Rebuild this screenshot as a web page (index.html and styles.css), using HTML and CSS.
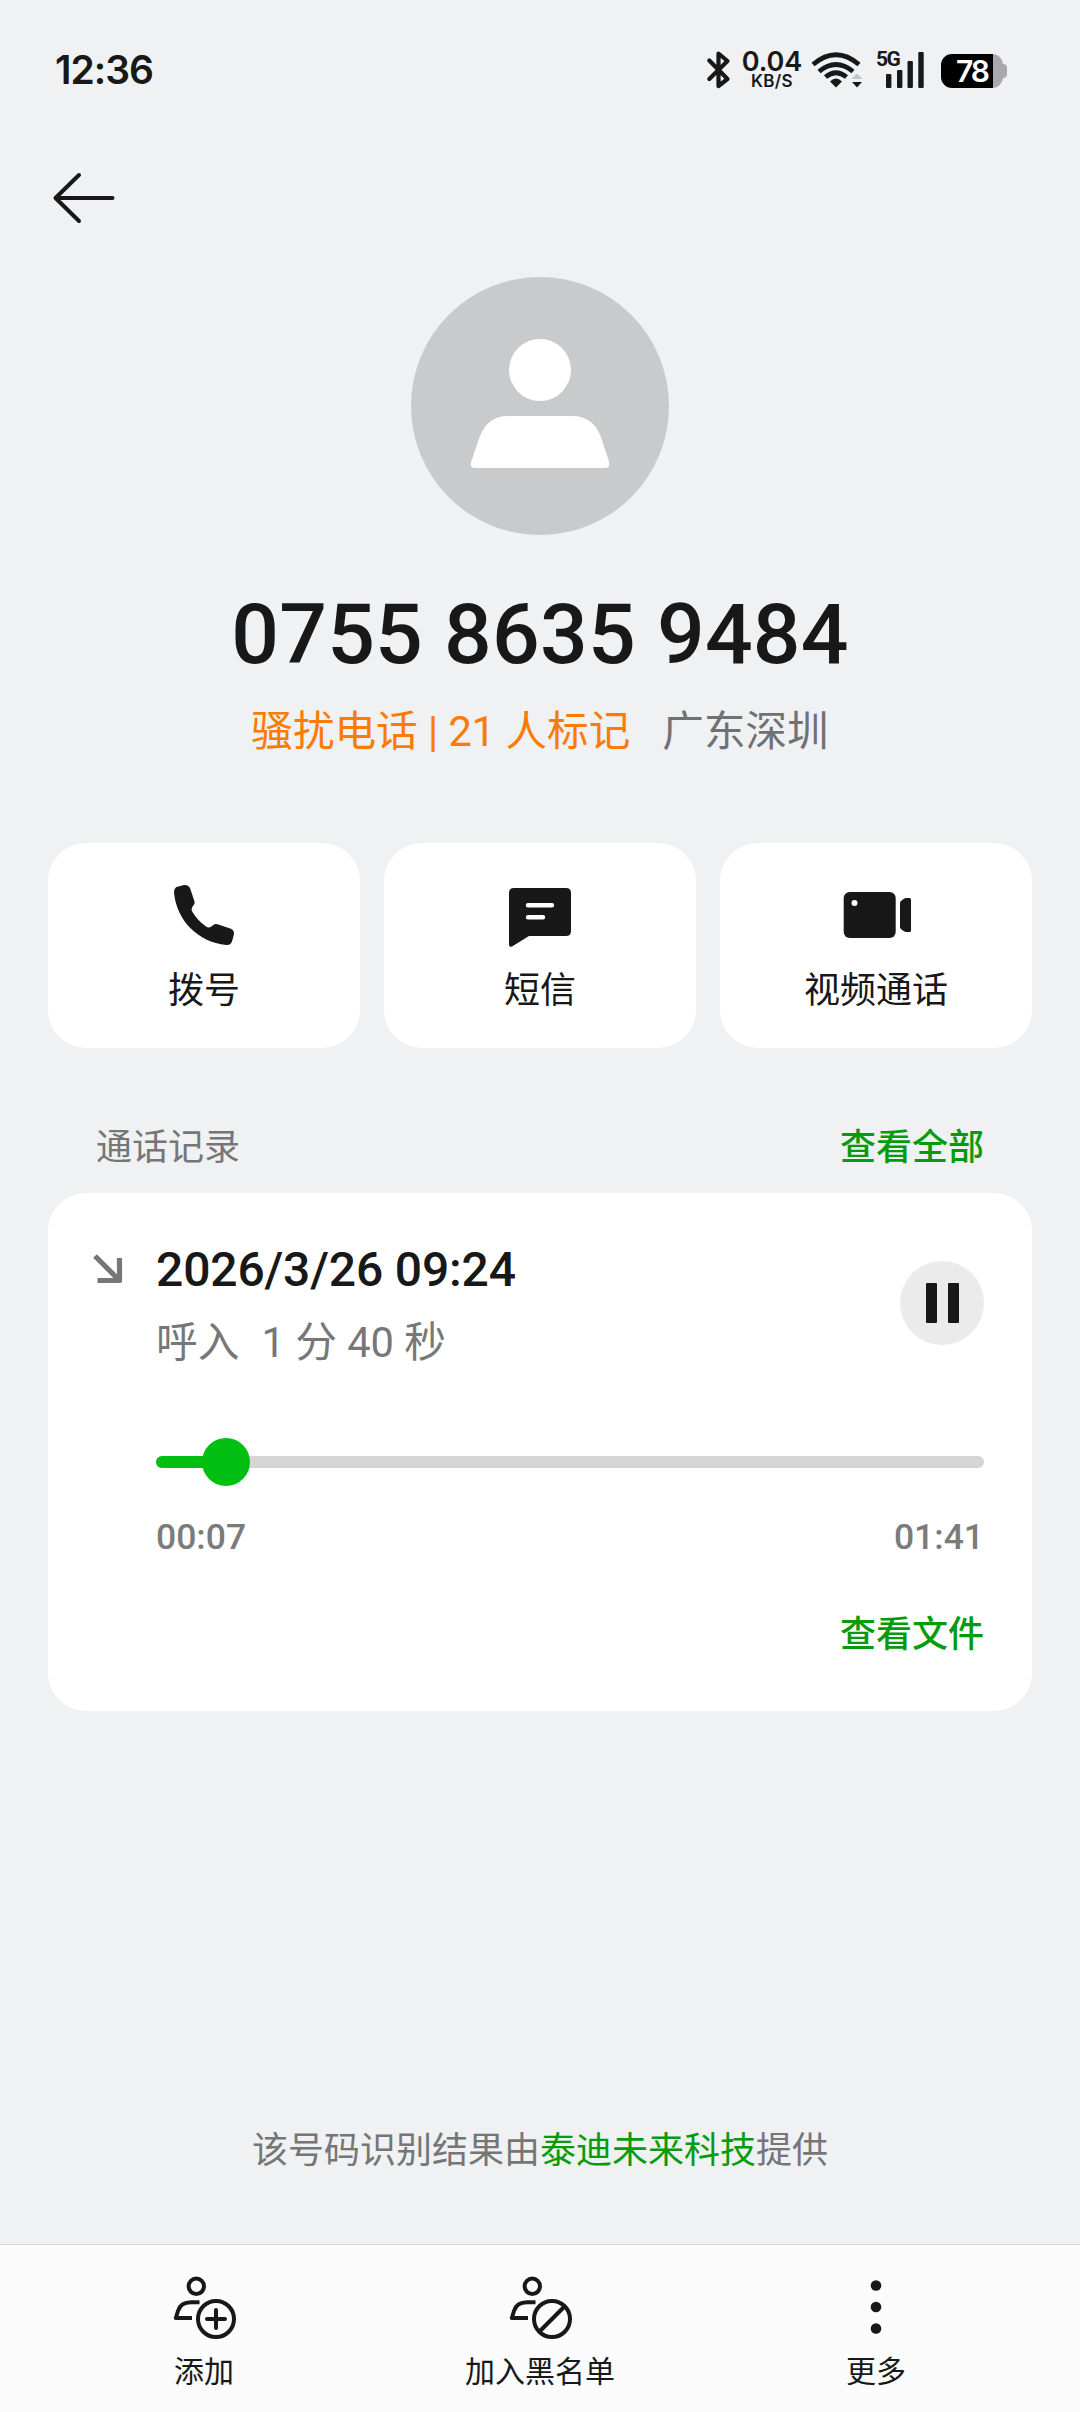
FILE: index.html
```html
<!DOCTYPE html>
<html lang="zh-CN">
<head>
<meta charset="utf-8">
<title>通话详情</title>
<link rel="stylesheet" href="styles.css">
</head>
<body>
<div class="screen">
  <header class="status">
    <span class="clock">12:36</span>
    <div class="status-icons">
      <svg class="bluetooth" width="24" height="38" viewBox="706 51 24 38"><path d="M708.300 60.500 L726.500 79 L717.500 86 V53.500 L726.500 61 L708.300 79" fill="none" stroke="#181818" stroke-width="4.200" stroke-linecap="round" stroke-linejoin="round"/></svg>
      <div class="speed"><span class="speed-value">0.04</span><span class="speed-unit">KB/S</span></div>
      <svg class="wifi" width="52" height="38" viewBox="811 51 52 38">
        <g fill="none" stroke="#181818" stroke-width="4.800">
          <path d="M813 64.500 Q836 45 859 64.500"/><path d="M819 71.500 Q836 57.500 853 71.500"/><path d="M825.500 77 Q836 68.500 846.500 77"/>
        </g>
        <path d="M830 81.500 Q836 75.500 842 81.500 L836 87.500 Z" fill="#181818"/>
        <path d="M851.500 79 L857 73.500 L862.500 79 Z" fill="#c4c4c6"/>
        <path d="M852 82 H862 L857 87.500 Z" fill="#181818"/>
      </svg>
      <div class="signal">
        <span class="network">5G</span>
        <svg width="38" height="36" viewBox="886 52 38 36"><g fill="#181818"><rect x="886" y="74" width="5.400" height="14" rx="1"/><rect x="897" y="70" width="5.400" height="18" rx="1"/><rect x="907.500" y="61" width="5.400" height="27" rx="1"/><rect x="918.300" y="52" width="5.400" height="36" rx="1"/></g></svg>
      </div>
      <div class="battery"><span class="battery-level">78</span></div>
    </div>
  </header>

  <nav class="back">
    <svg width="62" height="52" viewBox="53 172 62 52"><path d="M79 175 L55.500 198 L79 221 M56 198 H112.500" fill="none" stroke="#181818" stroke-width="4" stroke-linecap="round" stroke-linejoin="round"/></svg>
  </nav>

  <section class="profile">
    <svg width="258" height="258" viewBox="411 277 258 258">
      <circle cx="540" cy="406" r="129" fill="#c9cacc"/>
      <circle cx="540" cy="370" r="31" fill="#fff"/>
      <path d="M508 416 H572 C587 416 596 424 600.500 436 L609 461.500 Q610.500 468 605 468 H475 Q469.500 468 471 462 L480 436 C485 424 493 416 508 416 Z" fill="#fff"/>
    </svg>
    <h1 class="number">0755 8635 9484</h1>
    <p class="tags"><span class="spam">骚扰电话 | 21 人标记</span><span class="region">广东深圳</span></p>
  </section>

  <section class="actions">
    <div class="action">
      <svg width="60" height="60" viewBox="174 885 60 60"><path d="M176.500 887 L184 885 Q188 884.500 190 888 L194.500 901.500 Q195 903.500 193.700 905 L192 907.500 Q191 909.500 192.500 912 Q197.500 920.500 206 926.500 Q208.500 928.300 211 926.800 L214 924.500 Q215.500 923.500 217.500 924.300 L231 928.800 Q234.500 930.500 233.900 934.500 L232 941.500 Q230.500 945.300 226.500 945 C197 942 177 920 174.100 893.500 Q173.700 888.500 176.500 887 Z" fill="#181818"/></svg>
      <span>拨号</span>
    </div>
    <div class="action">
      <svg width="62" height="60" viewBox="509 885 62 60"><path d="M514 888 H566 Q571 888 571 893 V931 Q571 936 566 936 H529 L512 946.500 Q509 947.500 509 944.500 V893 Q509 888 514 888 Z" fill="#181818"/><path d="M528 905.300 H552 M528 917.300 H543" stroke="#fff" stroke-width="4.400" stroke-linecap="round"/></svg>
      <span>短信</span>
    </div>
    <div class="action">
      <svg width="68" height="60" viewBox="842 885 68 60"><rect x="843.700" y="892" width="52" height="46" rx="6" fill="#181818"/><circle cx="854.500" cy="903" r="3" fill="#fff"/><path d="M906.500 898 H909.500 Q911 898 911 899.500 V930.500 Q911 932 909.500 932 H906.500 Q905 932 903.500 931 L901 929 Q900 928 900 927 V903 Q900 902 901 901 L903.500 899 Q905 898 906.500 898 Z" fill="#181818"/></svg>
      <span>视频通话</span>
    </div>
  </section>

  <div class="section-head"><span>通话记录</span><a class="link">查看全部</a></div>

  <section class="record">
    <div class="record-top">
      <svg class="incoming" width="30" height="30" viewBox="93 1254 30 30"><path d="M95 1256 L119 1280 M97.500 1280.500 H119.500 V1258" fill="none" stroke="#777" stroke-width="5.200" stroke-linejoin="round"/></svg>
      <div class="record-text">
        <div class="date">2026/3/26 09:24</div>
        <div class="duration"><span>呼入</span><span>1 分 40 秒</span></div>
      </div>
      <div class="pause"><i></i><i></i></div>
    </div>
    <div class="player">
      <div class="track"><div class="played" style="width:8.45%"><b class="thumb"></b></div></div>
      <div class="times"><span>00:07</span><span>01:41</span></div>
      <a class="link file-link">查看文件</a>
    </div>
  </section>

  <p class="provider">该号码识别结果由<span>泰迪未来科技</span>提供</p>

  <footer class="toolbar">
    <div class="tool">
      <svg width="64" height="64" viewBox="172 2276 64 64"><g fill="none" stroke="#181818" stroke-width="4"><circle cx="196.300" cy="2286.300" r="7.700"/><path d="M199.500 2302.300 H191 C183 2302.300 179.500 2306 178 2311 L175.800 2318 H192" stroke-linejoin="round"/><circle cx="216" cy="2319" r="18"/><path d="M207 2319 H225 M216 2310 V2328" stroke-linecap="round"/></g></svg>
      <span>添加</span>
    </div>
    <div class="tool">
      <svg width="64" height="64" viewBox="172 2276 64 64"><g fill="none" stroke="#181818" stroke-width="4"><circle cx="196.300" cy="2286.300" r="7.700"/><path d="M199.500 2302.300 H191 C183 2302.300 179.500 2306 178 2311 L175.800 2318 H192" stroke-linejoin="round"/><circle cx="216" cy="2319" r="18"/><path d="M203.500 2331.500 L228.500 2306.500"/></g></svg>
      <span>加入黑名单</span>
    </div>
    <div class="tool">
      <svg width="64" height="64" viewBox="0 0 64 64"><g fill="#181818"><circle cx="32" cy="9.500" r="5.300"/><circle cx="32" cy="31" r="5.300"/><circle cx="32" cy="52.500" r="5.300"/></g></svg>
      <span>更多</span>
    </div>
  </footer>
</div>
</body>
</html>
```

FILE: styles.css
```css
* { box-sizing: border-box; margin: 0; padding: 0; }
body {
  background: #eff1f3;
  color: #181818;
  font-family: Roboto, "Noto Sans CJK SC", sans-serif;
}
svg { display: block; flex: none; overflow: visible; }
.screen {
  width: 1080px;
  height: 2412px;
  display: flex;
  flex-direction: column;
  overflow: hidden;
}

.status {
  height: 140px;
  padding: 45px 73px 0 55px;
  display: flex;
  justify-content: space-between;
  align-items: flex-start;
  font-family: Inter, sans-serif;
}
.clock { font-size: 39px; font-weight: 600; line-height: 49px; letter-spacing: -1px; }
.status-icons { display: flex; height: 48px; padding-top: 6px; }
.speed {
  width: 60px;
  margin: 0 9px 0 11px;
  display: flex;
  flex-direction: column;
  align-items: center;
  font-weight: 600;
}
.speed-value { font-size: 27px; line-height: 21px; }
.speed-unit { font-size: 17px; line-height: 14px; margin-top: 2px; letter-spacing: 0.3px; }
.signal { display: flex; margin-left: 13px; padding-top: 1px; }
.network { width: 10px; font: 700 21px/15px Roboto, sans-serif; letter-spacing: -1.5px; white-space: nowrap; }
.battery {
  width: 62px;
  height: 34px;
  margin: 3px 4px 0 17px;
  border-radius: 11px;
  position: relative;
  background: linear-gradient(90deg, #000 52px, #a9a9ab 52px);
  color: #fff;
  text-align: center;
}
.battery::after {
  content: "";
  position: absolute;
  right: -4px;
  top: 10px;
  width: 5px;
  height: 14px;
  border-radius: 0 4px 4px 0;
  background: #a9a9ab;
}
.battery-level { font-size: 30px; font-weight: 600; line-height: 35px; letter-spacing: -2px; }

.back { height: 137px; padding: 32px 53px 0; }

.profile { height: 566px; display: flex; flex-direction: column; align-items: center; }
.number { margin-top: 50px; font-size: 84px; font-weight: 500; line-height: 100px; letter-spacing: 0.2px; white-space: pre; }
.tags { display: flex; gap: 32px; margin-top: 17px; font-size: 41.6px; line-height: 60px; white-space: pre; }
.spam { color: #fa7b05; }
.region { color: #707173; }

.actions { display: grid; grid-template-columns: repeat(3, 1fr); gap: 24px; padding: 0 48px; }
.action {
  height: 205px;
  padding-top: 42px;
  border-radius: 38px;
  background: #fff;
  display: flex;
  flex-direction: column;
  align-items: center;
  font-size: 36px;
  line-height: 50px;
}
.action span { margin-top: 21px; }

.section-head {
  height: 145px;
  padding: 75px 96px 0;
  display: flex;
  justify-content: space-between;
  font-size: 36px;
  line-height: 50px;
  color: #757678;
}
.link { color: #049b0c; font-weight: 500; }

.record { height: 518px; margin: 0 48px; padding: 51px 48px 0 45px; border-radius: 38px; background: #fff; }
.record-top { display: flex; height: 212px; }
.incoming { margin-top: 10px; }
.record-text { flex: 1; padding-left: 33px; }
.date { padding-top: 1px; font-size: 48px; font-weight: 500; line-height: 50px; letter-spacing: -0.15px; }
.duration { display: flex; gap: 22px; margin-top: 18px; font-size: 41.7px; line-height: 60px; color: #777; white-space: pre; }
.pause {
  width: 84px;
  height: 84px;
  margin-top: 17px;
  border-radius: 50%;
  background: #ebebeb;
  display: flex;
  gap: 11px;
  justify-content: center;
  align-items: center;
}
.pause i { width: 11px; height: 40px; border-radius: 1px; background: #181818; }
.player { margin-left: 63px; display: flex; flex-direction: column; }
.track { height: 12px; border-radius: 6px; background: #d5d5d5; }
.played { height: 12px; border-radius: 6px; background: #00bf13; position: relative; }
.thumb { position: absolute; right: -24px; top: -18px; width: 48px; height: 48px; border-radius: 50%; background: #00bf13; }
.times { display: flex; justify-content: space-between; margin-top: 44px; font-size: 35.5px; font-weight: 500; line-height: 50px; color: #7b7b7b; }
.file-link { align-self: flex-end; margin-top: 48px; font-size: 36px; line-height: 50px; }

.provider { margin-top: 415px; text-align: center; font-size: 36px; line-height: 50px; color: #757678; }
.provider span { color: #049b0c; }

.toolbar {
  margin-top: auto;
  height: 168px;
  padding: 31px 36px 0;
  border-top: 1px solid #d8d8d8;
  background: #fbfbfb;
  display: grid;
  grid-template-columns: repeat(3, 1fr);
}
.tool { display: flex; flex-direction: column; align-items: center; font-size: 30px; line-height: 40px; }
.tool span { margin-top: 12px; }
```
